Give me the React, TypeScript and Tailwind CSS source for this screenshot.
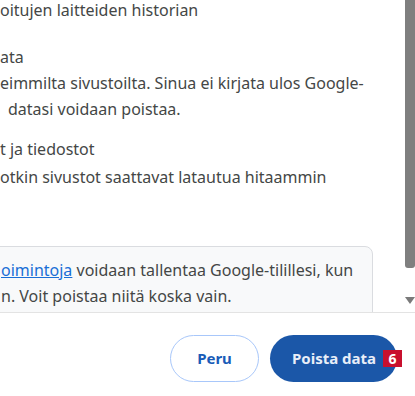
export default function App() {
  return (
    <div className="flex h-[396px] w-[415px] flex-col overflow-hidden bg-white font-['Noto_Sans',sans-serif] text-[16px] text-[#444746]">
      <div className="flex h-[312px] shrink-0">
        <div className="flex-1 overflow-hidden pr-[32px]">
          <div className="leading-[20px]">oitujen laitteiden historian</div>

          <div className="mt-[24px] leading-[26px]">ata</div>
          <div className="leading-[26px] whitespace-nowrap">eimmilta sivustoilta. Sinua ei kirjata ulos Google-</div>
          <div className="pl-[8px] leading-[26px]">datasi voidaan poistaa.</div>

          <div className="mt-[14px] leading-[26px]">t ja tiedostot</div>
          <div className="mt-[2px] leading-[26px]">otkin sivustot saattavat latautua hitaammin</div>

          <div className="ml-[-12px] mt-[56px] h-[120px] rounded-tr-[8px] border border-[#dadce0] bg-[#f8f9fa] pl-[12px] pt-[10px]">
            <div className="leading-[26px] whitespace-nowrap">
              <a href="#" className="text-[#1a6fd6] underline">oimintoja</a> voidaan tallentaa Google-tilillesi, kun
            </div>
            <div className="leading-[26px]">n. Voit poistaa niitä koska vain.</div>
          </div>
        </div>

        <div className="flex w-[10px] shrink-0 flex-col items-center">
          <div className="h-[268px] w-full rounded-b-[3px] bg-[#7f7f7f]" />
          <svg className="mt-[29px]" width="10" height="7" viewBox="0 0 10 7">
            <path d="M0 0 H10 L5 7 Z" fill="#7a7a7a" />
          </svg>
        </div>
      </div>

      <div className="h-px shrink-0 bg-[#e3e3e3]" />

      <div className="flex justify-end gap-[11px] pr-[18px] pt-[22px]">
        <button className="h-[47px] w-[89px] rounded-full border border-[#a8c7fa] bg-white text-[15px] font-bold text-[#1a5cb8]">
          Peru
        </button>
        <button className="relative h-[47px] w-[127px] rounded-full bg-[#1b57a8] pl-[22px] text-left text-[15px] font-bold text-[#e8eef8]">
          Poista data
          <span className="absolute right-[-5px] top-[15px] flex h-[17px] w-[19px] items-center justify-center bg-[#c8102e] text-[14px] font-bold leading-none text-white">
            6
          </span>
        </button>
      </div>
    </div>
  )
}
